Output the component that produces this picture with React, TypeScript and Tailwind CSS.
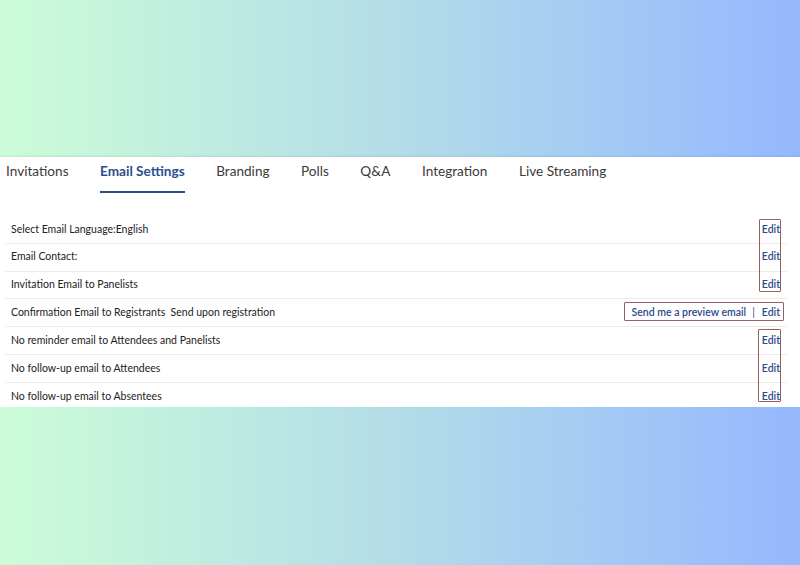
const tabs = ['Invitations', 'Email Settings', 'Branding', 'Polls', 'Q&A', 'Integration', 'Live Streaming']

const rows = [
  { label: 'Select Email Language:English' },
  { label: 'Email Contact:' },
  { label: 'Invitation Email to Panelists' },
  { label: 'Confirmation Email to Registrants\u00a0\u00a0Send upon registration', preview: true },
  { label: 'No reminder email to Attendees and Panelists' },
  { label: 'No follow-up email to Attendees' },
  { label: 'No follow-up email to Absentees' },
]

function App() {
  return (
    <div
      className="h-[565px] w-[800px] overflow-hidden bg-linear-to-r from-[#ccfdd7] via-[#b3dce8] to-[#95b8fe] pt-[157px]"
      style={{ fontFamily: 'Lato, "Open Sans", sans-serif' }}
    >
      <div className="relative h-[250px] bg-white shadow-[0_-1px_2px_rgba(0,0,0,0.08)]">
        <nav className="flex h-[36px] items-stretch pl-[6px] text-[13.6px] text-[#3b3b3b]">
          {tabs.map((t, i) => (
            <div
              key={t}
              className={
                i === 1
                  ? 'mr-[31.5px] flex items-center border-b-2 border-[#2c4a8c] pb-[6px] font-bold text-[#2c4e8e]'
                  : 'mr-[31.5px] flex items-center border-b-2 border-transparent pb-[6px]'
              }
            >
              {t}
            </div>
          ))}
        </nav>

        <div className="ml-[5px] mr-[13px] mt-[23px] text-[10.5px] text-[#222]">
          {rows.map((r, i) => (
            <div
              key={r.label}
              className={
                'flex h-[27.8px] items-center justify-between pl-[6px] pr-[7px] ' +
                (i < rows.length - 1 ? 'border-b border-[#ececec]' : '')
              }
            >
              <span>{r.label}</span>
              <span className="flex items-center font-semibold text-[#2a4a8a]">
                {r.preview && (
                  <>
                    <span>Send me a preview email</span>
                    <span className="ml-[6px] mr-[7px] font-normal">|</span>
                  </>
                )}
                <span>Edit</span>
              </span>
            </div>
          ))}
        </div>

        <div className="pointer-events-none absolute left-[759px] top-[62px] h-[73px] w-[22px] rounded-[1px] border-[1.5px] border-[#9c5f5f]" />
        <div className="pointer-events-none absolute left-[624px] top-[145px] h-[19px] w-[160px] rounded-[1px] border-[1.5px] border-[#9c5f5f]" />
        <div className="pointer-events-none absolute left-[758px] top-[172px] h-[73px] w-[23px] rounded-[1px] border-[1.5px] border-[#9c5f5f]" />
      </div>
    </div>
  )
}

export default App
